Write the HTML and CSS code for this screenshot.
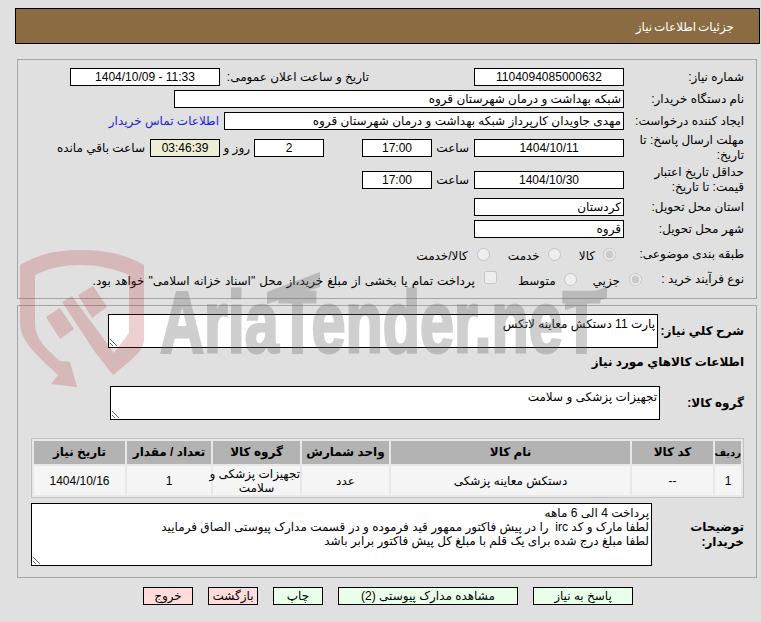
FILE: index.html
```html
<!DOCTYPE html>
<html lang="fa" dir="rtl">
<head>
<meta charset="utf-8">
<title>جزئیات اطلاعات نیاز</title>
<link rel="stylesheet" href="styles.css">
</head>
<body>
<header class="title-bar">جزئیات اطلاعات نیاز</header>

<section class="panel panel-info">
  <div class="row">
    <span class="label">شماره نیاز:</span>
    <input class="field w150" readonly value="1104094085000632">
    <span class="label-public">تاریخ و ساعت اعلان عمومی:</span>
    <input class="field w150" dir="ltr" readonly value="1404/10/09 - 11:33">
  </div>
  <div class="row">
    <span class="label">نام دستگاه خریدار:</span>
    <input class="field w450 start" readonly value="شبکه بهداشت و درمان شهرستان قروه">
  </div>
  <div class="row">
    <span class="label">ایجاد کننده درخواست:</span>
    <input class="field w400 start" readonly value="مهدی جاویدان کارپرداز شبکه بهداشت و درمان شهرستان قروه">
    <a class="contact" href="#">اطلاعات تماس خریدار</a>
  </div>
  <div class="row tall">
    <span class="label">مهلت ارسال پاسخ: تا تاریخ:</span>
    <input class="field w150" readonly value="1404/10/11">
    <span class="unit-hour">ساعت</span>
    <input class="field w70" readonly value="17:00">
    <input class="field w70 days" readonly value="2">
    <span class="unit-day">روز و</span>
    <input class="field w70 timer" readonly value="03:46:39">
    <span class="unit-left">ساعت باقي مانده</span>
  </div>
  <div class="row tall">
    <span class="label">حداقل تاریخ اعتبار قیمت: تا تاریخ:</span>
    <input class="field w150" readonly value="1404/10/30">
    <span class="unit-hour">ساعت</span>
    <input class="field w70" readonly value="17:00">
  </div>
  <div class="row">
    <span class="label">استان محل تحویل:</span>
    <input class="field w150 start" readonly value="کردستان">
  </div>
  <div class="row">
    <span class="label">شهر محل تحویل:</span>
    <input class="field w150 start" readonly value="قروه">
  </div>
  <div class="row choice subject">
    <span class="label">طبقه بندی موضوعی:</span>
    <input class="radio r1" type="radio" name="subject" checked disabled>
    <span class="opt o1">کالا</span>
    <input class="radio r2" type="radio" name="subject" disabled>
    <span class="opt o2">خدمت</span>
    <input class="radio r3" type="radio" name="subject" disabled>
    <span class="opt o3">کالا/خدمت</span>
  </div>
  <div class="row choice process">
    <span class="label label-process">نوع فرآیند خرید :</span>
    <input class="radio" type="radio" name="process" checked disabled>
    <span class="opt q1">جزیي</span>
    <input class="radio p2" type="radio" name="process" disabled>
    <span class="opt q2">متوسط</span>
    <input class="check" type="checkbox" disabled>
    <span class="opt q3">پرداخت تمام یا بخشی از مبلغ خرید،از محل "اسناد خزانه اسلامی" خواهد بود.</span>
  </div>
</section>

<section class="panel panel-goods">
  <div class="row area-row">
    <span class="label-bold l87">شرح کلي نياز:</span>
    <textarea class="area a-desc" readonly>پارت 11 دستکش معاینه لاتکس</textarea>
  </div>
  <h2 class="heading">اطلاعات کالاهاي مورد نياز</h2>
  <div class="row area-row">
    <span class="label-bold l85">گروه کالا:</span>
    <textarea class="area a-group" readonly>تجهیزات پزشکی و سلامت</textarea>
  </div>
  <table class="goods">
    <colgroup>
      <col class="c1"><col class="c2"><col class="c3"><col class="c4"><col class="c5"><col class="c6"><col class="c7">
    </colgroup>
    <thead>
      <tr><th class="narrow">ردیف</th><th>کد کالا</th><th>نام کالا</th><th>واحد شمارش</th><th>گروه کالا</th><th>تعداد / مقدار</th><th>تاریخ نیاز</th></tr>
    </thead>
    <tbody>
      <tr><td>1</td><td>--</td><td>دستکش معاینه پزشکی</td><td>عدد</td><td class="nowrap">تجهیزات پزشکی و<br>سلامت</td><td>1</td><td>1404/10/16</td></tr>
    </tbody>
  </table>
  <div class="row area-row notes-row">
    <span class="label-bold l93">توضیحات خریدار:</span>
    <textarea class="area a-notes" readonly>پرداخت 4 الی 6 ماهه
لطفا مارک و کد irc  را در پیش فاکتور ممهور قید فرموده و در قسمت مدارک پیوستی الصاق فرمایید
لطفا مبلغ درج شده برای یک قلم با مبلغ کل پیش فاکتور برابر باشد</textarea>
  </div>
</section>

<nav class="actions">
  <button class="btn ok w100" type="button">پاسخ به نیاز</button>
  <button class="btn ok w180" type="button">مشاهده مدارک پیوستی (2)</button>
  <button class="btn ok w50" type="button">چاپ</button>
  <button class="btn danger w50" type="button">بازگشت</button>
  <button class="btn danger w50" type="button">خروج</button>
</nav>

<svg class="watermark" viewBox="0 0 761 622" aria-hidden="true">
  <g class="wm-logo">
    <path d="M20 265 C40 253 60 250 80 250 C105 250 125 254 144 265 L144 340 C144 352 125 365 113 375 L95 352 L114 353 L129 333 L129 275 C112 268 97 265 80 265 C63 265 50 268 35 275 L35 323 C35 340 48 350 60 361 L70 362 L77 387 L51 384 L58 375 C40 358 20 342 20 323 Z"/>
    <path d="M46 317 L60 308 L74 329 L60 339 Z"/>
    <path d="M62 302 L72 296 L114 353 L95 352 Z"/>
    <path d="M78 295 L93 286 L107 307 L92 318 Z"/>
  </g>
  <g class="wm-word">
    <text class="wm-text" x="160" y="352" textLength="440" lengthAdjust="spacingAndGlyphs" direction="ltr">AriaTender.neT</text>
    <path d="M267 292 L320 272 L320 287 L267 304 Z"/>
    <path d="M565 300 L607 287 L607 298 L565 310 Z"/>
  </g>
</svg>
</body>
</html>
```

FILE: styles.css
```css
html, body {
  margin: 0;
  padding: 0;
  height: 622px;
  overflow: hidden;
}
body {
  position: relative;
  background: #e0e0e0;
  color: #000;
  font-family: "Liberation Sans", "DejaVu Sans", sans-serif;
  font-size: 12px;
  line-height: 15px;
}
.title-bar {
  box-sizing: border-box;
  height: 36px;
  margin: 8px 1px 0 0;
  width: 745px;
  padding: 3px 25px 0 0;
  border: 1px solid #000;
  background: #8b6c42;
  color: #fff;
  word-spacing: -1.5px;
  display: flex;
  align-items: center;
  white-space: pre;
}
.panel {
  box-sizing: border-box;
  width: 740px;
  margin-right: 4px;
  border: 1px solid #a5a5a5;
  padding: 8px 11px 0 0;
}
.panel-info {
  height: 240px;
  margin-top: 15px;
  display: flex;
  flex-direction: column;
  gap: 4px;
}
.panel-goods {
  height: 273px;
  margin-top: 6px;
}
.row {
  display: flex;
  align-items: center;
  height: 18px;
  flex: none;
}
.row.tall { height: 28px; }
.row.choice { height: 24px; }
.row.subject { margin-bottom: -3px; }
.label { width: 121px; flex: none; padding: 0 1px 0 6px; box-sizing: border-box; }
.label-process { width: 103px; }
.label-public { width: 149px; flex: none; margin-right: 105px; }
.field {
  box-sizing: border-box;
  height: 18px;
  border: 1px solid #000;
  background: #fff;
  padding: 0 2px;
  margin: 0;
  font: inherit;
  text-align: center;
  border-radius: 0;
  outline: 0;
  flex: none;
}
.field.start { text-align: right; }
.w70 { width: 70px; }
.w150 { width: 150px; }
.w400 { width: 400px; }
.w450 { width: 450px; }
.contact { color: #2222dd; text-decoration: none; margin-right: 5px; }
.unit-hour { width: 42px; flex: none; padding-right: 5px; box-sizing: border-box; }
.days { margin-right: 38px; }
.unit-day { width: 34px; flex: none; padding-right: 4px; box-sizing: border-box; }
.timer { background: #eeeed5; }
.unit-left { margin-right: 5px; }
.radio, .check { margin: 0; flex: none; width: 13px; height: 13px; }
.opt { flex: none; padding-top: 4px; }
.r1 { margin-right: 8px; }
.o1 { margin-right: 8px; }
.r2 { margin-right: 18px; }
.o2 { margin-right: 8px; }
.r3 { margin-right: 18px; }
.o3 { margin-right: 9px; }
.q1 { margin-right: 9px; }
.p2 { margin-right: 16px; }
.q2 { margin-right: 8px; }
.check { margin-right: 21px; margin-bottom: 3px; }
.q3 { margin-right: 9px; word-spacing: 0.7px; }
.label-bold { flex: none; font-weight: 700; box-sizing: border-box; padding-right: 1px; }
.l87 { width: 87px; }
.l85 { width: 85px; }
.l93 { width: 93px; padding-left: 10px; }
.area-row { height: auto; }
.area {
  display: block;
  box-sizing: border-box;
  width: 550px;
  border: 1px solid #000;
  background: #fff;
  padding: 2px;
  margin: 0;
  font: inherit;
  font-size: 12px;
  outline: 0;
  border-radius: 0;
  flex: none;
}
.a-desc, .a-group { height: 34px; }
.a-group { padding-top: 3px; }
.a-notes { width: 621px; height: 63px; line-height: 14px; }
.heading {
  margin: 6px 1px 16px 0;
  font-size: 12px;
  line-height: 16px;
  font-weight: 700;
}
.goods {
  table-layout: fixed;
  width: 713px;
  height: 60px;
  margin: 18px 1px 5px 0;
  border: 1px solid #c0c0c0;
  border-spacing: 2px;
  background: #e8e8e8;
  text-align: center;
}
.goods th { background: #b3b3b3; padding: 0; height: 23px; font-weight: 700; }
.goods th.narrow { font-size: 10px; }
.goods td { background: #f5f5f5; padding: 0; height: 28px; line-height: 14px; }
.goods .nowrap { white-space: nowrap; }
.c1 { width: 26px; }
.c2 { width: 81px; }
.c3 { width: 239px; }
.c4 { width: 87px; }
.c5 { width: 87px; }
.c6 { width: 84px; }
.c7 { width: 91px; }
.actions {
  display: flex;
  justify-content: center;
  gap: 15px;
  width: 746px;
  margin-top: 9px;
}
.btn {
  box-sizing: border-box;
  height: 18px;
  padding: 0;
  border: 1px solid #000;
  border-radius: 0;
  font: inherit;
  color: #000;
}
.ok { background: #eaffea; }
.danger { background: #ffdcdc; }
.w50 { width: 50px; }
.w100 { width: 100px; }
.w180 { width: 180px; }
.watermark {
  position: absolute;
  top: 0;
  left: 0;
  width: 761px;
  height: 622px;
  pointer-events: none;
}
.wm-logo path { fill: rgba(180, 40, 40, 0.22); }
.wm-word { opacity: 0.3; fill: #646464; }
.wm-text {
  font-family: "Liberation Sans", sans-serif;
  font-weight: 700;
  font-size: 87px;
  stroke: #646464;
  stroke-width: 3px;
}
```
